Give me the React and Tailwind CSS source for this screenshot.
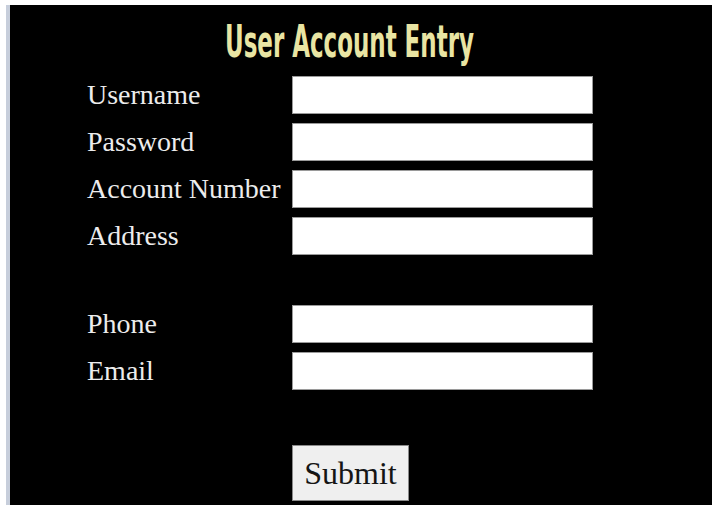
const fields = [
  { label: "Username", type: "text" },
  { label: "Password", type: "password" },
  { label: "Account Number", type: "text" },
  { label: "Address", type: "text" },
];

const contactFields = [
  { label: "Phone", type: "text" },
  { label: "Email", type: "text" },
];

function FieldRow({ label, type }) {
  return (
    <div className="flex h-[38px] items-center">
      <label className="w-[205px] leading-[38px] text-[28px] text-[#ececec] whitespace-nowrap">{label}</label>
      <input
        type={type}
        className="h-[38px] w-[301px] border border-[#9a9a9a] bg-white outline-none"
      />
    </div>
  );
}

export default function App() {
  return (
    <div className="flex h-[505px] w-[712px] bg-white pl-[6px] pt-[5px]">
      <div className="w-[4px] bg-[#c7cedb]" />
      <div
        className="flex-1 bg-black"
        style={{ fontFamily: '"Liberation Serif", "DejaVu Serif", serif' }}
      >
        <h1
          className="ml-[215px] mt-[15px] origin-left scale-x-[0.58] text-[44px] font-bold leading-none text-[#e9e5a3] whitespace-nowrap"
          style={{ fontFamily: '"Liberation Sans Narrow", "DejaVu Sans Condensed", sans-serif' }}
        >
          User Account Entry
        </h1>
        <form className="ml-[77px] mt-[12px]" onSubmit={(e) => e.preventDefault()}>
          <div className="flex flex-col gap-[9px]">
            {fields.map((f) => (
              <FieldRow key={f.label} {...f} />
            ))}
          </div>
          <div className="mt-[50px] flex flex-col gap-[9px]">
            {contactFields.map((f) => (
              <FieldRow key={f.label} {...f} />
            ))}
          </div>
          <button
            type="submit"
            className="ml-[205px] mt-[55px] h-[56px] w-[117px] border border-[#8a8a8a] bg-[#efefef] text-[32px] leading-none text-[#151515]"
          >
            Submit
          </button>
        </form>
      </div>
    </div>
  );
}
